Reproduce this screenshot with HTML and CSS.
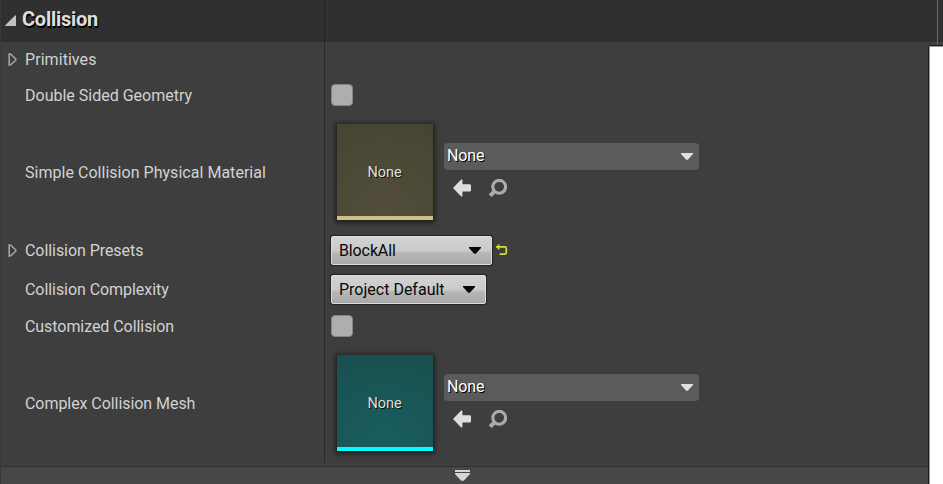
FILE: index.html
```html
<!DOCTYPE html>
<html lang="en">
<head>
<meta charset="utf-8">
<title>Collision</title>
<link rel="stylesheet" href="styles.css">
</head>
<body>
<svg class="defs" width="0" height="0">
  <symbol id="expand" viewBox="0 0 9 13"><path d="M1.2 1V12L2.8 11.8L7.8 7V6L2.8 1.2Z" fill="none" stroke="#a6a6a6" stroke-width="1.6"/></symbol>
  <symbol id="caret" viewBox="0 0 12 7"><path d="M0 0H12V1L6.8 6.8H5.2L0 1Z" fill="currentColor"/></symbol>
  <symbol id="arrow" viewBox="0 0 18 18"><path d="M0 9L8.2 .6Q9.4 .2 9.4 1.4V5.2H16.6Q18 5.2 18 6.6V11.2Q18 12.6 16.6 12.6H9.4V16.6Q9.4 17.8 8.2 17.4Z" fill="#dedede"/></symbol>
  <symbol id="search" viewBox="0 0 18 18"><circle cx="10.2" cy="7.8" r="6.4" fill="none" stroke="#acacac" stroke-width="3.1"/><path d="M5.7 12.2L1.2 16.7" stroke="#acacac" stroke-width="4"/></symbol>
</svg>
<main class="window">
  <section class="panel">
    <header class="header">
      <svg class="collapse" width="11" height="12" viewBox="0 0 11 12"><path d="M0 10.6L10 .4Q11 0 11 1V11H.6Z" fill="#c0c0c0"/></svg>
      <h1>Collision</h1>
    </header>
    <div class="rows">
      <div class="row r-prim"><div class="name"><svg class="expand" width="9" height="13"><use href="#expand"/></svg><span class="t1">Primitives</span></div><div class="value"></div></div>
      <div class="row r-double"><div class="name"><span class="t2">Double Sided Geometry</span></div><div class="value"><i class="check"></i></div></div>
      <div class="row r-material"><div class="name"><span class="t3">Simple Collision Physical Material</span></div><div class="value">
        <div class="thumb olive"><span>None</span></div>
        <div class="asset"><div class="combo"><span>None</span><svg width="12" height="7"><use href="#caret"/></svg></div>
        <div class="tools"><svg width="18" height="18"><use href="#arrow"/></svg><svg width="18" height="18"><use href="#search"/></svg></div></div>
      </div></div>
      <div class="row r-presets"><div class="name"><svg class="expand" width="9" height="13"><use href="#expand"/></svg><span class="t4">Collision Presets</span></div><div class="value">
        <div class="select block"><span>BlockAll</span><svg width="12" height="7"><use href="#caret"/></svg></div>
        <svg class="reset" width="12" height="12" viewBox="0 0 12 12"><path d="M0 2.9H9Q10.3 2.9 10.3 4.2V8.8Q10.3 10.1 9 10.1H3.6M2.6 .4V5.4" fill="none" stroke="#d7df32" stroke-width="1.7"/></svg>
      </div></div>
      <div class="row r-complexity"><div class="name"><span class="t5">Collision Complexity</span></div><div class="value"><div class="select project"><span>Project Default</span><svg width="12" height="7"><use href="#caret"/></svg></div></div></div>
      <div class="row r-custom"><div class="name"><span class="t6">Customized Collision</span></div><div class="value"><i class="check"></i></div></div>
      <div class="row r-mesh"><div class="name"><span class="t7">Complex Collision Mesh</span></div><div class="value">
        <div class="thumb teal"><span>None</span></div>
        <div class="asset"><div class="combo"><span>None</span><svg width="12" height="7"><use href="#caret"/></svg></div>
        <div class="tools"><svg width="18" height="18"><use href="#arrow"/></svg><svg width="18" height="18"><use href="#search"/></svg></div></div>
      </div></div>
    </div>
    <footer class="more"><svg width="15" height="11" viewBox="0 0 15 11"><path d="M0 0H15V2H0ZM0 3H15V4L8.8 10.8H6.2L0 4Z" fill="#d6d6d6"/></svg></footer>
  </section>
  <aside class="side"><div class="rail"></div><div class="page"></div></aside>
</main>
</body>
</html>
```
FILE: styles.css
```css
* { box-sizing: border-box; }
body { margin: 0; background: #3e3e3e; color: #d2d2d2; font: 16px/20px Roboto, sans-serif; overflow: hidden; }
svg { display: block; flex: none; }
.defs { position: absolute; }
.window { display: grid; grid-template-columns: 928px 15px; width: 943px; height: 484px; }
.panel { display: flex; flex-direction: column; border-left: 1px solid #383838; }
.header { height: 42px; display: flex; align-items: flex-start; padding: 9px 0 0 4px; background: linear-gradient(90deg, #303030 323px, #242424 323px 324px, #303030 324px); }
.collapse { margin-top: 6px; }
h1 { margin: 0 0 0 6px; font-size: 20px; line-height: 20px; font-weight: 700; letter-spacing: -.25px; color: #dedede; text-shadow: 1px 1px #000, 1px 2px #000; }
.rows { height: 421px; background: linear-gradient(90deg, transparent 323px, #292929 323px 324px, transparent 324px); }
.row { display: grid; grid-template-columns: 324px 1fr; align-items: center; }
.name { display: flex; align-items: center; padding-left: 24px; white-space: nowrap; }
.expand { margin: 0 8px 1px -17px; }
.value { display: flex; align-items: center; padding-left: 6px; }
.r-prim { height: 35px; }
.r-double { height: 36px; }
.r-material { height: 118px; }
.r-presets { height: 39px; }
.r-complexity { height: 38px; }
.r-custom { height: 36px; }
.r-mesh { height: 118px; }
.r-double .name, .r-material .name, .r-complexity .name, .r-custom .name, .r-mesh .name { padding-top: 2px; }
.t1 { letter-spacing: .06px; }
.t3 { letter-spacing: .03px; }
.t4, .t5, .t6, .t7 { letter-spacing: -.06px; }
.check { width: 22px; height: 22px; background: #aeaeae; border: 1px solid #858585; border-radius: 4px; }
.thumb { width: 96px; height: 96px; margin-left: 6px; display: flex; align-items: center; justify-content: center; font-size: 14.5px; letter-spacing: -.05px; color: #dedede; text-shadow: 1px 1px #111; box-shadow: 0 1px 4px 2px #202020; border-bottom: 4px solid; }
.thumb span { margin: 6px 1px 0 0; }
.olive { background: radial-gradient(circle at 50% 100%, #534e3b, #454433); border-color: #ccc184; }
.teal { background: radial-gradient(circle at 50% 100%, #195f60, #194f4f); border-color: #00ffff; }
.asset { margin: 0 0 4px 11px; width: 255px; }
.combo { display: flex; align-items: center; justify-content: space-between; height: 27px; padding: 0 6px 1px 3px; background: #5b5b5b; border-radius: 4px; color: #fff; text-shadow: 1px 1px #000; }
.combo span { letter-spacing: -.15px; }
.combo svg { color: #e0e0e0; }
.tools { display: flex; gap: 18px; padding: 9px 0 0 9px; }
.select { display: flex; align-items: center; justify-content: space-between; height: 29px; padding: 0 10px 1px 7px; color: #080808; border: 1px solid #dcdcdc; border-radius: 2px; background: linear-gradient(#d3d3d3, #cacaca 50%, #b6b6b6 60%, #a9a9a9); box-shadow: 0 0 1px 1px #242424; white-space: nowrap; }
.select svg { margin-top: 1px; }
.select span { padding-top: 2px; }
.block { width: 161px; }
.block span { letter-spacing: -.12px; }
.project { width: 155px; }
.reset { margin: 0 0 2px 4px; }
.more { height: 21px; margin-top: auto; padding-top: 7px; display: flex; justify-content: center; background: linear-gradient(#3e3e3e 3px, #303030 3px 4px, #474747 4px); }
.more svg { margin-right: 5px; }
.side { display: flex; flex-direction: column; }
.rail { height: 45px; background: linear-gradient(90deg, transparent 9px, #686868 9px 10px, transparent 10px), linear-gradient(#303030 42px, #3e3e3e 42px); }
.page { flex: 1; background: #fff; border-left: 1px solid #1c1c1c; border-top: 1px solid #1c1c1c; box-shadow: inset 1px 1px #999; border-radius: 2px 0 0; }
```
